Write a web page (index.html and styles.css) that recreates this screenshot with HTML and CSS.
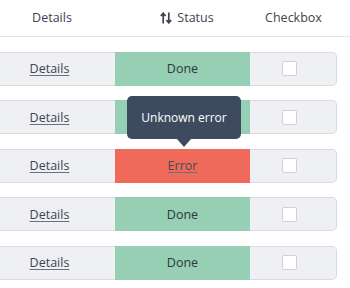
FILE: index.html
```html
<!DOCTYPE html>
<html lang="en">
<head>
    <meta charset="UTF-8">
    <meta name="viewport" content="width=device-width, initial-scale=1.0">
    <title>Status list</title>
    <link rel="stylesheet" href="styles.css">
</head>
<body>
    <div class="grid">
        <div class="head">
            <div class="col-details">Details</div>
            <div class="col-status">
                <svg class="sort" width="12" height="12" viewBox="0 0 12 12">
                    <path d="M3.2 11.5V1.5M0.8 4L3.2 1.2L5.6 4" fill="none" stroke="#3d4450" stroke-width="1.7"/>
                    <path d="M8.8 0.5V10.5M6.4 8L8.8 10.8L11.2 8" fill="none" stroke="#3d4450" stroke-width="1.7"/>
                </svg>
                Status
            </div>
            <div class="col-check">Checkbox</div>
        </div>

        <div class="row">
            <div class="col-details cell"><a href="#">Details</a></div>
            <div class="col-status cell done">Done</div>
            <div class="col-check cell"><span class="box"></span></div>
        </div>
        <div class="row">
            <div class="col-details cell"><a href="#">Details</a></div>
            <div class="col-status cell done">Done</div>
            <div class="col-check cell"><span class="box"></span></div>
        </div>
        <div class="row">
            <div class="col-details cell"><a href="#">Details</a></div>
            <div class="col-status cell error">
                <a href="#">Error</a>
                <div class="tooltip">Unknown error</div>
            </div>
            <div class="col-check cell"><span class="box"></span></div>
        </div>
        <div class="row">
            <div class="col-details cell"><a href="#">Details</a></div>
            <div class="col-status cell done">Done</div>
            <div class="col-check cell"><span class="box"></span></div>
        </div>
        <div class="row">
            <div class="col-details cell"><a href="#">Details</a></div>
            <div class="col-status cell done">Done</div>
            <div class="col-check cell"><span class="box"></span></div>
        </div>
    </div>
</body>
</html>
```

FILE: styles.css
```css
body {
    margin: 0;
    font-family: "Open Sans", Arial, sans-serif;
    font-size: 12.5px;
    color: #3d4450;
    background-color: #fff;
    overflow: hidden;
}
.grid {
    width: 350px;
}
.head {
    display: flex;
    height: 35px;
    align-items: center;
    border-bottom: 1px solid #e3e4e7;
    margin-left: -17px;
    padding-bottom: 1px;
}
.head > div {
    display: flex;
    justify-content: center;
    align-items: center;
    gap: 5px;
    box-sizing: border-box;
}
.head > .col-details {
    padding-left: 6px;
}
.head > .col-status {
    padding-left: 9px;
}
.sort {
    margin-top: 1px;
}
.col-details {
    width: 132px;
}
.col-status {
    width: 135px;
}
.col-check {
    width: 87px;
}
.row {
    display: flex;
    height: 34px;
    margin-top: 14.5px;
    margin-left: -17px;
}
.row:first-of-type {
    margin-top: 15px;
}
.cell {
    display: flex;
    justify-content: center;
    align-items: center;
    box-sizing: border-box;
    background-color: #eef0f3;
    border-top: 1px solid #d9dbe0;
    border-bottom: 1px solid #d9dbe0;
    position: relative;
}
.col-details.cell {
    border-left: 1px solid #d9dbe0;
    border-radius: 5px 0 0 5px;
}
.col-check.cell {
    border-right: 1px solid #d9dbe0;
    border-radius: 0 5px 5px 0;
    padding-right: 8px;
}
.cell a {
    color: #3d4450;
    text-decoration: underline;
    text-decoration-color: #6b717c;
    text-underline-offset: 2px;
}
.done {
    background-color: #96cfb4;
    border-color: #96cfb4;
    color: #2f3640;
}
.error {
    background-color: #ef6a5a;
    border-color: #ef6a5a;
}
.error a {
    color: #444a55;
}
.box {
    width: 15px;
    height: 15px;
    box-sizing: border-box;
    background-color: #fff;
    border: 1px solid #cfd1d5;
    border-radius: 2px;
}
.tooltip {
    position: absolute;
    left: 12px;
    bottom: 43px;
    width: 114px;
    height: 43px;
    box-sizing: border-box;
    display: flex;
    align-items: center;
    justify-content: center;
    background-color: #3e4a5d;
    color: #fff;
    font-size: 12px;
    border-radius: 5px;
}
.tooltip::after {
    content: "";
    position: absolute;
    left: 50%;
    bottom: -8px;
    margin-left: -7px;
    border-left: 7px solid transparent;
    border-right: 7px solid transparent;
    border-top: 8px solid #3e4a5d;
}
```
